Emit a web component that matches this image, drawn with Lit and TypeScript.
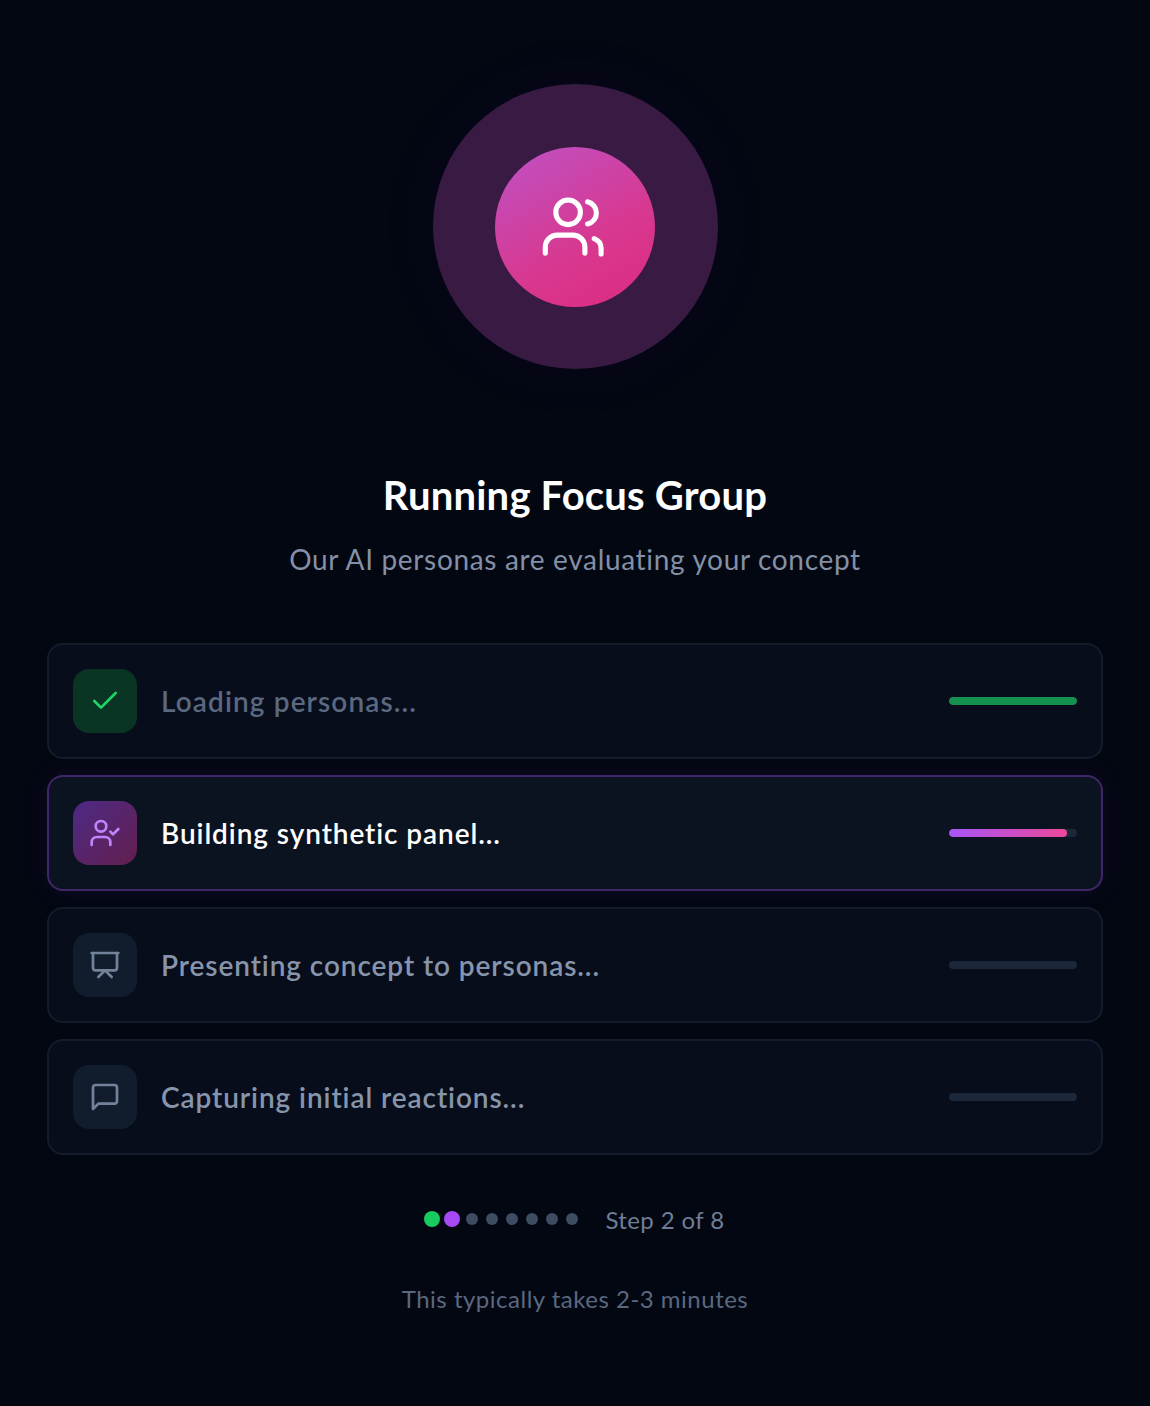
import { LitElement, html, css, svg } from "lit";
import { customElement } from "lit/decorators.js";

const steps = [
  { label: "Loading personas...", state: "done", icon: svg`<path d="M20 6 9 17l-5-5"/>` },
  { label: "Building synthetic panel...", state: "active", icon: svg`<path d="M16 21v-2a4 4 0 0 0-4-4H6a4 4 0 0 0-4 4v2"/><circle cx="9" cy="7" r="4"/><path d="m16 11 2 2 4-4"/>` },
  { label: "Presenting concept to personas...", state: "pending", icon: svg`<path d="M2 3h20"/><path d="M21 3v11a2 2 0 0 1-2 2H5a2 2 0 0 1-2-2V3"/><path d="m7 21 5-5 5 5"/>` },
  { label: "Capturing initial reactions...", state: "pending", icon: svg`<path d="M21 15a2 2 0 0 1-2 2H7l-4 4V5a2 2 0 0 1 2-2h14a2 2 0 0 1 2 2z"/>` },
];

@customElement("app-root")
export class AppRoot extends LitElement {
  static styles = css`
    :host { display: block; width: 1150px; height: 1406px; background: #030712; font-family: "Lato", sans-serif; color: #fff; overflow: hidden; }
    .page { display: flex; flex-direction: column; align-items: center; padding: 84px 47px 0; box-sizing: border-box; }
    .halo { width: 285px; height: 285px; border-radius: 50%; background: #391a43; display: flex; align-items: center; justify-content: center; box-shadow: 0 0 60px 0 rgba(88,28,135,0.08); }
    .core { width: 160px; height: 160px; border-radius: 50%; background: linear-gradient(150deg, #bd52c6 0%, #d8388f 60%, #dd2a80 100%); display: flex; align-items: center; justify-content: center; }
    .core svg { width: 72px; height: 72px; fill: none; stroke: #fff; stroke-width: 1.7; stroke-linecap: round; stroke-linejoin: round; }
    h1 { margin: 100px 0 0; font-size: 40px; line-height: 52px; font-weight: 700; letter-spacing: 0.2px; }
    .sub { margin: 18px 0 0; font-size: 28px; line-height: 40px; color: #8390a6; letter-spacing: 0.67px; }
    .list { width: 1056px; margin-top: 64px; display: flex; flex-direction: column; gap: 16px; }
    .card { box-sizing: border-box; height: 116px; padding: 0 24px; display: flex; align-items: center; gap: 24px; border: 2px solid #141c2c; border-radius: 16px; background: #070d1b; }
    .card.active { background: #0b1220; border-color: #3f2768; box-shadow: 0 0 24px rgba(88,28,135,0.15); }
    .ico { width: 64px; height: 64px; border-radius: 16px; background: #111c2c; display: flex; align-items: center; justify-content: center; }
    .ico svg { width: 32px; height: 32px; fill: none; stroke: #73829b; stroke-width: 2; stroke-linecap: round; stroke-linejoin: round; }
    .done .ico { background: #0a3524; }
    .done .ico svg { stroke: #22d36a; }
    .active .ico { background: linear-gradient(135deg, #4d2a85, #631f4e); }
    .active .ico svg { stroke: #c084fc; }
    .label { flex: 1; font-size: 28px; line-height: 40px; font-weight: 600; letter-spacing: 0.92px; color: #8795ab; }
    .done .label { color: #5a6880; letter-spacing: 1.12px; }
    .active .label { color: #fff; }
    .bar { width: 128px; height: 8px; border-radius: 4px; background: #1c2739; overflow: hidden; }
    .fill { height: 100%; border-radius: 4px; }
    .done .fill { width: 100%; background: #14904f; }
    .active .fill { width: 92%; background: linear-gradient(90deg, #a855f7, #ec4899); }
    .progress { margin: 44px 0 0 1px; display: flex; align-items: center; gap: 27px; }
    .dots { display: flex; gap: 8px; }
    .dot { width: 12px; height: 12px; border-radius: 50%; background: #3f4d63; }
    .dot.g { background: #18cb5f; transform: scale(1.33); }
    .dot.p { background: #a648f5; transform: scale(1.33); }
    .step { font-size: 24px; line-height: 40px; color: #6f7e96; letter-spacing: 0.4px; position: relative; top: 1px; }
    .note { margin-top: 40px; font-size: 24px; line-height: 40px; color: #5a6880; letter-spacing: 0.5px; }
  `;
  render() {
    return html`<div class="page">
      <div class="halo"><div class="core">
        <svg viewBox="0 0 24 24"><path d="M15.3 20.7v-2a4 4 0 0 0-4-4H6.1a4 4 0 0 0-4 4v2"/><circle cx="9.7" cy="7.1" r="4.1"/><path d="M16.2 3.6a3.8 3.8 0 0 1 0 7.4"/><path d="M18.4 15.9a3.5 3.5 0 0 1 2.3 3.2V21"/></svg>
      </div></div>
      <h1>Running Focus Group</h1>
      <p class="sub">Our AI personas are evaluating your concept</p>
      <div class="list">
        ${steps.map((s) => html`<div class="card ${s.state}">
          <div class="ico"><svg viewBox="0 0 24 24">${s.icon}</svg></div>
          <div class="label">${s.label}</div>
          <div class="bar"><div class="fill"></div></div>
        </div>`)}
      </div>
      <div class="progress">
        <div class="dots">${[0,1,2,3,4,5,6,7].map((i) => html`<div class="dot ${i === 0 ? "g" : i === 1 ? "p" : ""}"></div>`)}</div>
        <div class="step">Step 2 of 8</div>
      </div>
      <div class="note">This typically takes 2-3 minutes</div>
    </div>`;
  }
}
